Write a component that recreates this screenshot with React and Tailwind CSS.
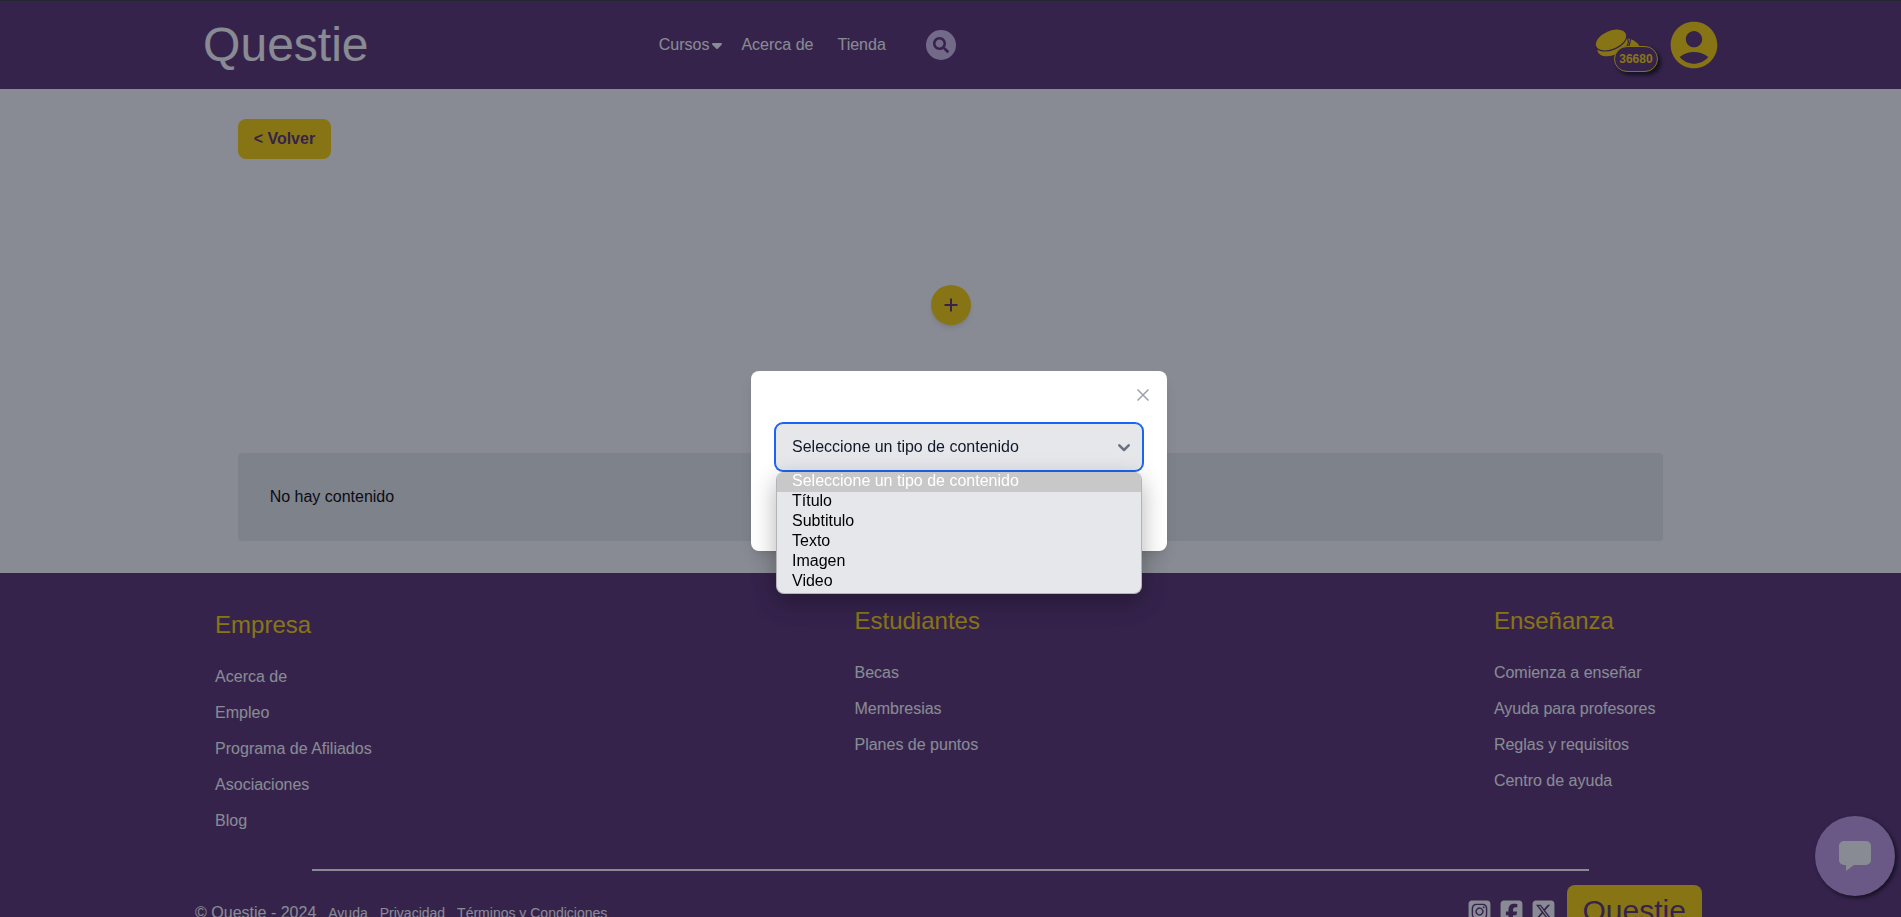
import { FaCaretDown, FaSquareInstagram, FaSquareFacebook, FaSquareXTwitter } from "react-icons/fa6";
import { FaSearch } from "react-icons/fa";
import { MdAccountCircle } from "react-icons/md";

const columns = [
  { title: "Empresa", links: ["Acerca de", "Empleo", "Programa de Afiliados", "Asociaciones", "Blog"], pad: "pt-1" },
  { title: "Estudiantes", links: ["Becas", "Membresias", "Planes de puntos"], pad: "" },
  { title: "Enseñanza", links: ["Comienza a enseñar", "Ayuda para profesores", "Reglas y requisitos", "Centro de ayuda"], pad: "" },
];

const options = ["Seleccione un tipo de contenido", "Título", "Subtitulo", "Texto", "Imagen", "Video"];

function CoinsIcon() {
  return (
    <svg viewBox="0 0 48 48" className="size-12" aria-hidden="true">
      <g fill="#fdd203">
        <ellipse cx="32" cy="26" rx="14.5" ry="9" transform="rotate(14 32 26)" />
        <path d="M36 15c1 4 0 8-2 12" fill="none" stroke="#592e71" strokeWidth="1.2" />
        <ellipse cx="18.6" cy="24.8" rx="16" ry="9.2" transform="rotate(-23 18.6 24.8)" stroke="#592e71" strokeWidth="2.4" paintOrder="stroke" />
        <ellipse cx="17" cy="19" rx="16" ry="9" transform="rotate(-23 17 19)" stroke="#592e71" strokeWidth="2.4" paintOrder="stroke" />
      </g>
    </svg>
  );
}

function Header() {
  return (
    <header className="h-[89px] border-t border-[#303539] bg-[#592e71] text-white">
      <div className="mx-auto grid h-full w-[82%] grid-cols-[30%_1fr_auto] items-center pl-8 pr-2">
        <a href="#inicio" className="text-5xl">Questie</a>
        <nav className="flex items-center">
          <button type="button" className="flex items-center">
            Cursos
            <FaCaretDown className="size-4" />
          </button>
          <a href="#acerca" className="ml-4">Acerca de</a>
          <a href="#tienda" className="ml-6">Tienda</a>
          <button type="button" aria-label="Buscar" className="ml-10 flex size-[30px] items-center justify-center rounded-full bg-[#d5bceb] text-[#592e71]">
            <FaSearch className="size-4" />
          </button>
        </nav>
        <div className="flex items-center justify-end gap-6 text-[#fdd203]">
          <div className="relative">
            <CoinsIcon />
            <span className="absolute left-5 top-[25px] flex h-[26px] w-11 items-center justify-center rounded-full border border-[#fdd203] bg-[#592e71] text-xs font-bold shadow-[3px_3px_4px_rgba(0,0,0,0.8)]">
              36680
            </span>
          </div>
          <button type="button" aria-label="Mi cuenta">
            <MdAccountCircle className="size-14" />
          </button>
        </div>
      </div>
    </header>
  );
}

function Content() {
  return (
    <main className="mx-auto w-3/4 pb-8 pt-[30px]">
      <button type="button" className="h-10 rounded-lg bg-[#fdd203] px-4 font-bold text-[#592e71]">
        &lt; Volver
      </button>
      <div className="mt-[126px] flex justify-center">
        <button type="button" aria-label="Agregar contenido" className="flex size-10 items-center justify-center rounded-full bg-[#fdd203] text-[#592e71] shadow-md">
          <svg viewBox="0 0 14 14" className="size-[14px]" fill="none" stroke="currentColor" strokeWidth="2">
            <path d="M7 0.5v13M0.5 7h13" />
          </svg>
        </button>
      </div>
      <section className="mt-32 rounded-sm bg-[#ebecee] p-8 text-black">
        <p>No hay contenido</p>
      </section>
    </main>
  );
}

function Footer() {
  return (
    <footer className="bg-[#592e71] pb-8 pt-8 text-white">
      <div className="mx-auto w-4/5">
        <div className="flex justify-between pl-[25px] pr-[45px]">
          {columns.map((column) => (
            <section key={column.title} className={`w-[172px] ${column.pad}`}>
              <h2 className="text-2xl text-[#fdd203]">{column.title}</h2>
              <ul className="mt-6 flex flex-col gap-3">
                {column.links.map((link) => (
                  <li key={link}>
                    <a href="#enlace">{link}</a>
                  </li>
                ))}
              </ul>
            </section>
          ))}
        </div>
        <hr className="mx-auto mt-9 w-[84%] border-t-2 border-white" />
        <div className="mt-[14px] flex items-center justify-between pl-[5px] pr-[9px]">
          <div className="flex items-center gap-3 pt-1 text-sm">
            <span className="text-base">© Questie - 2024</span>
            <a href="#ayuda">Ayuda</a>
            <a href="#privacidad">Privacidad</a>
            <a href="#terminos">Términos y Condiciones</a>
          </div>
          <div className="flex items-center gap-[7px]">
            <a href="#instagram" aria-label="Instagram"><FaSquareInstagram className="size-[25px]" /></a>
            <a href="#facebook" aria-label="Facebook"><FaSquareFacebook className="size-[25px]" /></a>
            <a href="#x" aria-label="X"><FaSquareXTwitter className="size-[25px]" /></a>
            <a href="#inicio" className="ml-1 rounded-lg bg-[#fdd203] px-4 py-2 text-3xl text-[#592e71]">Questie</a>
          </div>
        </div>
      </div>
    </footer>
  );
}

function ContentDialog() {
  return (
    <div className="fixed inset-0 flex items-center justify-center bg-[#111827]/50 pl-[17px] pt-[5px]">
      <div role="dialog" aria-modal="true" aria-label="Agregar contenido" className="flex h-[180px] w-[416px] flex-col rounded-lg bg-white p-6 pt-4 shadow-lg">
        <button type="button" aria-label="Cerrar" className="-mr-4 flex h-4 w-8 items-center justify-center self-end text-gray-400">
          <svg viewBox="0 0 12 12" className="size-3" fill="none" stroke="currentColor" strokeWidth="1.5">
            <path d="M0.5 0.5l11 11M11.5 0.5l-11 11" />
          </svg>
        </button>
        <div className="relative mt-5">
          <select
            aria-label="Tipo de contenido"
            defaultValue={options[0]}
            className="h-12 w-full appearance-none rounded-lg border border-[#1c64f2] bg-gray-200 px-4 text-base text-gray-900 outline-none ring-1 ring-[#1c64f2]"
          >
            {options.map((option) => (
              <option key={option}>{option}</option>
            ))}
          </select>
          <svg viewBox="0 0 12 8" className="pointer-events-none absolute right-[13px] top-[21px] h-2 w-3" fill="none" stroke="#6b7280" strokeWidth="2.5" strokeLinecap="round" strokeLinejoin="round">
            <path d="M1.3 1.3L6 6l4.7-4.7" />
          </svg>
          <ul role="listbox" aria-label="Opciones" className="absolute inset-x-px top-[49px] overflow-hidden rounded-lg border border-t-0 border-[#b4b4b6] bg-gray-200 pb-px text-base leading-[18px] text-black shadow-[0_8px_24px_rgba(0,0,0,0.3)]">
            {options.map((option, index) => (
              <li
                key={option}
                role="option"
                aria-selected={index === 0}
                className="px-[15px] pb-0.5 aria-selected:bg-[#c8c8c8] aria-selected:text-white"
              >
                {option}
              </li>
            ))}
          </ul>
        </div>
      </div>
    </div>
  );
}

export default function App() {
  return (
    <div className="h-screen overflow-hidden bg-white font-['Liberation_Sans',Arial,sans-serif] text-base">
      <Header />
      <Content />
      <Footer />
      <button type="button" aria-label="Abrir chat" className="fixed bottom-[21px] right-[6px] flex size-20 items-center justify-center rounded-full bg-[#c398e5] text-white shadow-[2px_2px_4px_rgba(0,0,0,0.8)]">
        <svg viewBox="0 0 32 30" className="h-[30px] w-8" fill="currentColor">
          <path d="M5 0h22a5 5 0 0 1 5 5v14a5 5 0 0 1-5 5H15l-8 6v-6H5a5 5 0 0 1-5-5V5a5 5 0 0 1 5-5z" />
        </svg>
      </button>
      <ContentDialog />
    </div>
  );
}
